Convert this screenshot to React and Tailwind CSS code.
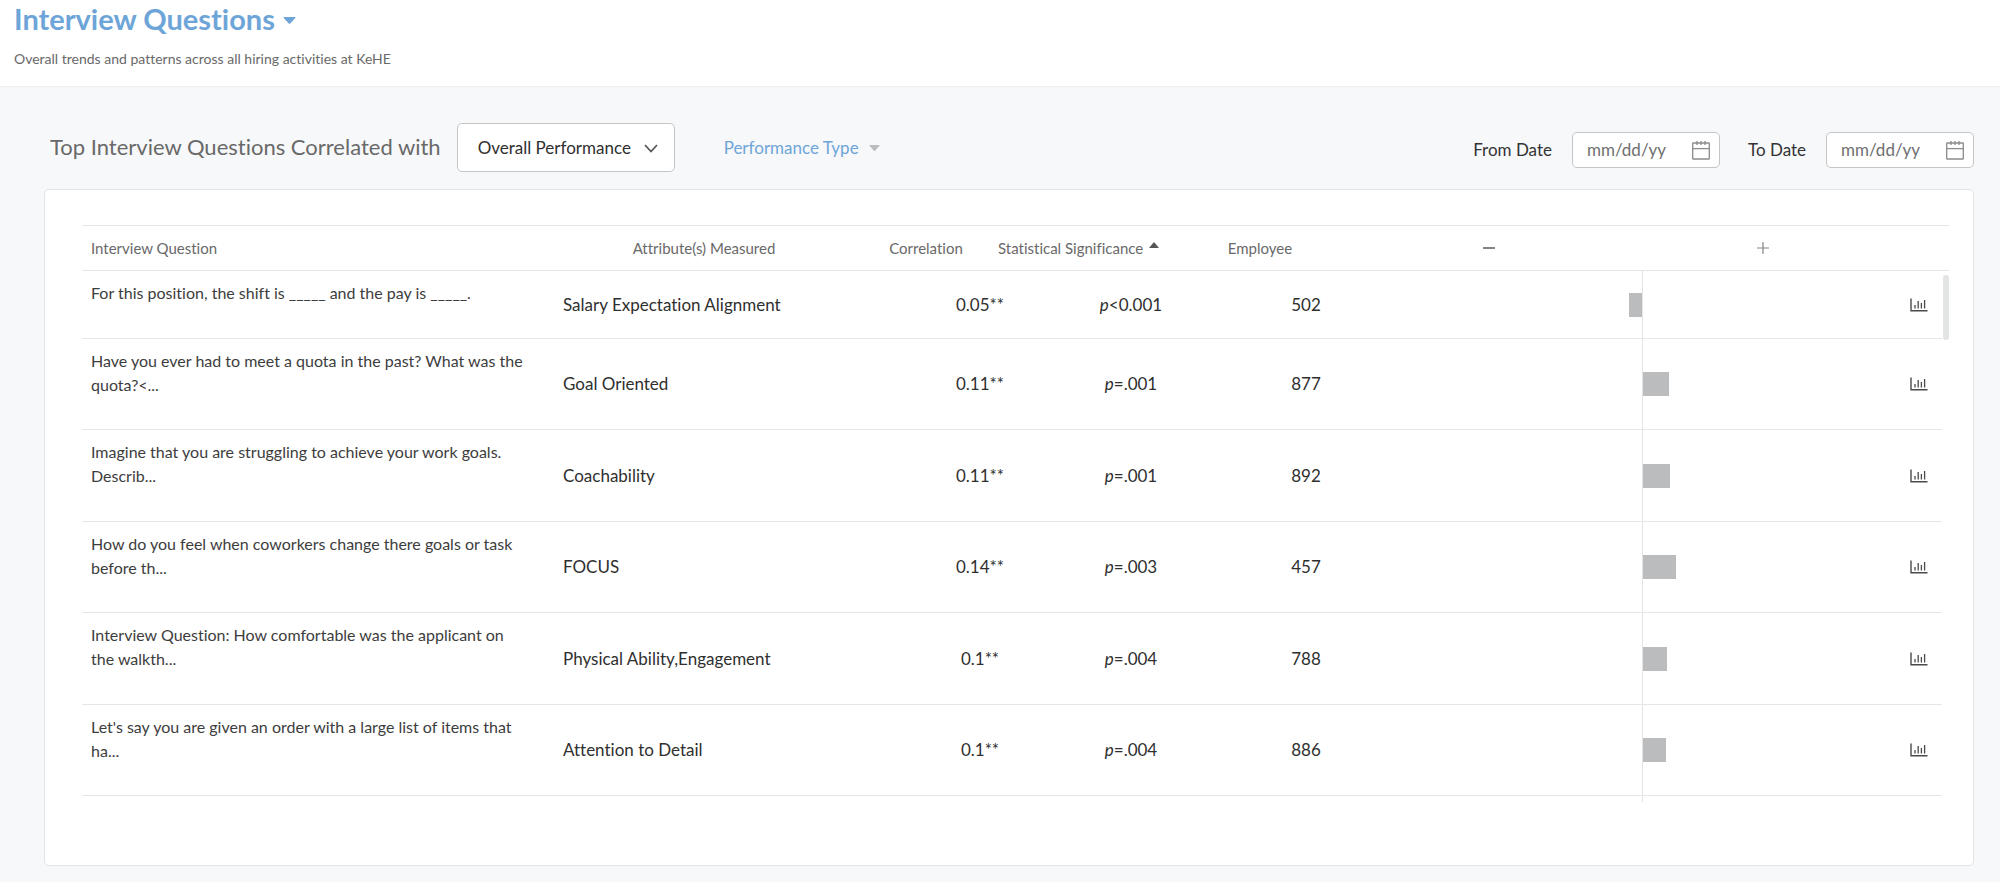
const rows = [
  { question: "For this position, the shift is _____ and the pay is _____.", attribute: "Salary Expectation Alignment", correlation: "0.05**", p: "<0.001", employees: 502, negative: 13, positive: 0 },
  { question: "Have you ever had to meet a quota in the past? What was the quota?<...", attribute: "Goal Oriented", correlation: "0.11**", p: "=.001", employees: 877, negative: 0, positive: 26 },
  { question: "Imagine that you are struggling to achieve your work goals. Describ...", attribute: "Coachability", correlation: "0.11**", p: "=.001", employees: 892, negative: 0, positive: 27 },
  { question: "How do you feel when coworkers change there goals or task before th...", attribute: "FOCUS", correlation: "0.14**", p: "=.003", employees: 457, negative: 0, positive: 33 },
  { question: "Interview Question: How comfortable was the applicant on the walkth...", attribute: "Physical Ability,Engagement", correlation: "0.1**", p: "=.004", employees: 788, negative: 0, positive: 24 },
  { question: "Let's say you are given an order with a large list of items that ha...", attribute: "Attention to Detail", correlation: "0.1**", p: "=.004", employees: 886, negative: 0, positive: 23 },
];

const headGrid = "grid grid-cols-[472px_300px_144px_170px_184px_minmax(0,1fr)_minmax(0,1fr)_49px]";
const bodyGrid = "grid grid-cols-[472px_326px_200px_102px_197px_minmax(0,1fr)_minmax(0,1fr)_38px]";

function Caret({ className }) {
  return (
    <svg viewBox="0 0 12 7" className={className} fill="currentColor" aria-hidden="true">
      <path d="M0.6 0h10.8c.5 0 .8.6.4 1L6.7 6.6a1 1 0 0 1-1.4 0L.2 1C-.2.6.1 0 .6 0z" />
    </svg>
  );
}

function CalendarIcon() {
  return (
    <svg viewBox="0 0 18 19" className="h-[19px] w-[18px] shrink-0" fill="none" stroke="#8c8c8c" strokeWidth="1.3" aria-hidden="true">
      <rect x="0.7" y="2" width="16.6" height="16" rx="0.6" />
      <path d="M0.7 7.7h16.6M5 0v4M9 0v4M13 0v4" />
    </svg>
  );
}

function ChartIcon() {
  return (
    <svg viewBox="0 0 18 14" className="h-[14px] w-[18px]" fill="none" stroke="#4a4a4a" aria-hidden="true">
      <path d="M1 0.5v12.2h16.5" strokeWidth="1.4" />
      <path d="M5 7v3.5M8.2 3v7.5M11.4 5v5.5M14.6 2v8.5" strokeWidth="1.3" />
    </svg>
  );
}

function DateField({ id, label }) {
  return (
    <div className="flex items-center gap-5">
      <label htmlFor={id} className="text-[17px] leading-6 text-[#333]">{label}</label>
      <div className="flex h-9 w-[148px] items-center rounded-[5px] border border-[#c4c5c7] bg-white pr-[9px] pl-[14px]">
        <input id={id} type="text" placeholder="mm/dd/yy" className="w-full min-w-0 text-[17px] text-[#555] outline-none placeholder:text-[#6f6f6f]" />
        <CalendarIcon />
      </div>
    </div>
  );
}

function Row({ row }) {
  const first = row.negative > 0;
  return (
    <tr className={`${bodyGrid} ${first ? "h-[68px]" : "even:h-[91px] odd:h-[92px]"} border-b border-[#e6e6e7]`}>
      <td className="pt-[10px] pr-6 pl-[9px] text-base leading-6 text-[#3d3d3d]">{row.question}</td>
      <td className="flex items-center pl-[9px]">{row.attribute}</td>
      <td className="flex items-center justify-center">{row.correlation}</td>
      <td className="flex items-center justify-center"><span><i>p</i>{row.p}</span></td>
      <td className="flex items-center justify-center pl-[51px]">{row.employees}</td>
      <td className="flex items-center justify-end">
        <div className="h-6 bg-[#bbbcbe]" style={{ width: row.negative }} />
      </td>
      <td className="flex items-center border-l border-[#e3e3e4]">
        <div className="h-6 bg-[#bbbcbe]" style={{ width: row.positive }} />
      </td>
      <td className="flex items-center pl-[6px]">
        <button type="button" aria-label="Show chart"><ChartIcon /></button>
      </td>
    </tr>
  );
}

export default function App() {
  return (
    <div className="min-h-screen bg-[#f7f8fa] font-['Lato',sans-serif] text-[#2f2f2f] [font-variant-ligatures:none]">
      <header className="border-b border-[#eeeff0] bg-white px-[14px] pb-[17px]">
        <h1 className="text-[29px] leading-[38px] font-bold text-[#6ea5d8]">
          <button type="button" className="flex items-center gap-2">
            Interview Questions
            <Caret className="mt-[3px] h-[7px] w-[13px]" />
          </button>
        </h1>
        <p className="mt-[10px] text-sm leading-[21px] text-[#696969]">Overall trends and patterns across all hiring activities at KeHE</p>
      </header>

      <main className="px-[26px] pt-9 pb-3 pl-[44px]">
        <div className="flex items-center pl-[6px]">
          <h2 className="pb-[2px] text-[22px] leading-8 text-[#696969]">Top Interview Questions Correlated with</h2>
          <div className="relative ml-4">
            <select aria-label="Performance measure" className="h-[49px] w-[218px] appearance-none rounded-[5px] border border-[#c4c5c7] bg-white pl-5 text-[17px] text-[#2f2f2f]">
              <option>Overall Performance</option>
            </select>
            <svg viewBox="0 0 14 9" className="pointer-events-none absolute top-[21px] right-[17px] h-[9px] w-[14px]" fill="none" stroke="#555" strokeWidth="1.7" aria-hidden="true">
              <path d="M1 1l6 6.5L13 1" />
            </svg>
          </div>
          <button type="button" className="ml-[49px] flex items-center gap-[10px] text-[17px] leading-6 text-[#6ea5d8]">
            Performance Type
            <Caret className="h-[6px] w-[11px] text-[#bbbcbe]" />
          </button>
          <div className="ml-auto flex gap-7 pt-[5px]">
            <DateField id="from-date" label="From Date" />
            <DateField id="to-date" label="To Date" />
          </div>
        </div>

        <section className="mt-[17px] rounded-[5px] border border-[#e3e4e6] bg-white pt-[35px] pr-[24px] pb-[63px] pl-[37px]">
          <div className="relative">
            <table className="block w-full">
              <thead className="block">
                <tr className={`${headGrid} h-[46px] items-center border-y border-[#e6e6e7] text-[15px] text-[#696969] [&>th]:font-normal`}>
                  <th className="pl-[9px] text-left">Interview Question</th>
                  <th>Attribute(s) Measured</th>
                  <th>Correlation</th>
                  <th className="text-left">
                    <button type="button" className="flex items-center gap-[6px] whitespace-nowrap">
                      Statistical Significance
                      <svg viewBox="0 0 10 6" className="mb-[7px] h-[6px] w-[10px] shrink-0" fill="#555" aria-hidden="true"><path d="M5 0l5 6H0z" /></svg>
                    </button>
                  </th>
                  <th>Employee</th>
                  <th aria-label="Negative correlation">
                    <svg viewBox="0 0 12 12" className="mx-auto h-3 w-3" stroke="#858585" strokeWidth="2" aria-hidden="true"><path d="M0 6h12" /></svg>
                  </th>
                  <th aria-label="Positive correlation">
                    <svg viewBox="0 0 12 12" className="mx-auto h-3 w-3" stroke="#858585" strokeWidth="1.2" aria-hidden="true"><path d="M0 6h12M6 0v12" /></svg>
                  </th>
                  <th aria-label="Chart" />
                </tr>
              </thead>
              <tbody className="mr-[7px] block text-[17px]">
                {rows.map((row) => <Row key={row.question} row={row} />)}
                <tr className={`${bodyGrid} h-[6px]`} aria-hidden="true">
                  <td className="col-start-7 border-l border-[#e3e3e4]" />
                </tr>
              </tbody>
            </table>
            <div className="absolute top-[50px] right-0 h-[65px] w-[6px] rounded-full bg-[#e3e4e4]" />
          </div>
        </section>
      </main>
    </div>
  );
}
